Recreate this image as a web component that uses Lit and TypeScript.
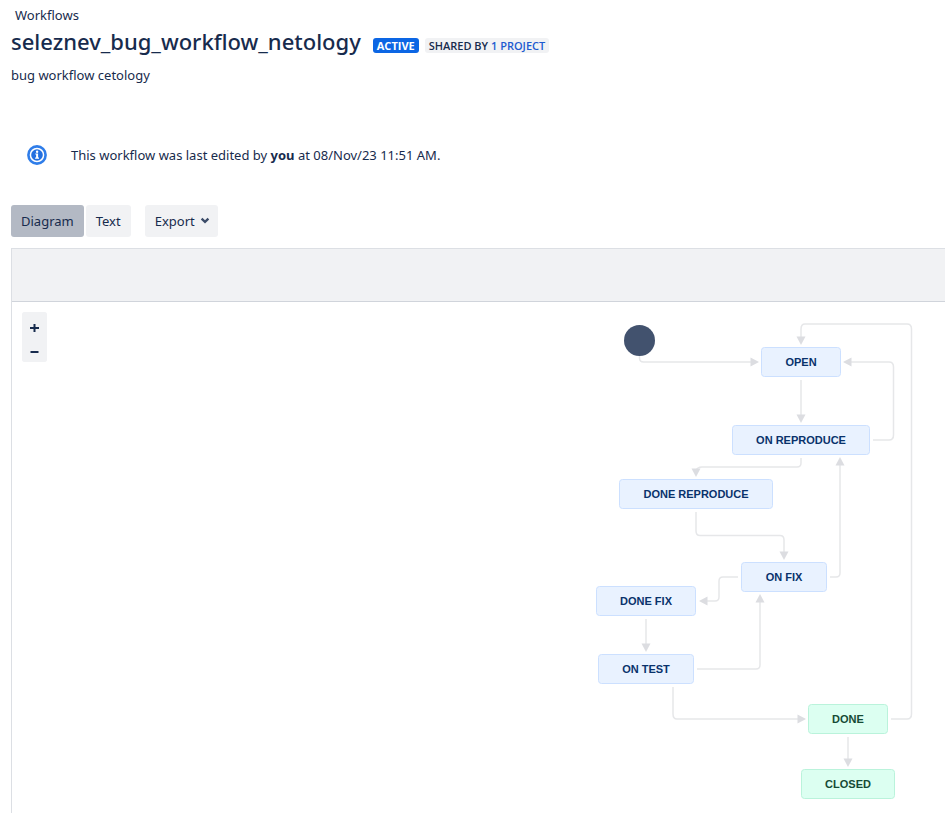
import { LitElement, html, svg, css } from "lit";
import { customElement, state } from "lit/decorators.js";

interface Status {
  label: string;
  x: number;
  y: number;
  width: number;
  done?: boolean;
}

const STATUSES: Status[] = [
  { label: "OPEN", x: 761, y: 347, width: 80 },
  { label: "ON REPRODUCE", x: 732, y: 425, width: 138 },
  { label: "DONE REPRODUCE", x: 619, y: 479, width: 154 },
  { label: "ON FIX", x: 741, y: 562, width: 86 },
  { label: "DONE FIX", x: 596, y: 586, width: 100 },
  { label: "ON TEST", x: 598, y: 654, width: 96 },
  { label: "DONE", x: 808, y: 704, width: 80, done: true },
  { label: "CLOSED", x: 801, y: 769, width: 94, done: true },
];

/* Each transition: the line, then the tip of its arrow head and its heading in degrees. */
const TRANSITIONS: [string, number, number, number][] = [
  ["M639.5 356V358Q639.5 362 643.5 362H752", 759, 362, 0],
  ["M891 719H907Q911.5 719 911.5 714V329Q911.5 324 907 324H805Q801 324 801 329V338", 801, 345, 90],
  ["M873 440H889Q893.5 440 893.5 435V367Q893.5 362 889 362H850", 843, 362, 180],
  ["M801 380V416", 801, 423, 90],
  ["M801 458V463Q801 467 797 467H702Q697 467 696 471", 696, 477, 90],
  ["M696 512V531Q696 535.5 700 535.5H780Q784 535.5 784 540V553", 784, 560, 90],
  ["M830 577H836Q840 577 840 573V465", 840, 457, 270],
  ["M738 577H723Q719 577 719 581V597Q719 601 715 601H706", 699, 601, 180],
  ["M646 619V645", 646, 652, 90],
  ["M697 669H756Q760 669 760 665V602", 760, 594, 270],
  ["M673 687V714Q673 719 677 719H798", 806, 719, 0],
  ["M848 737V760", 848, 767, 90],
];

@customElement("workflow-diagram")
export class WorkflowDiagram extends LitElement {
  static styles = css`
    :host { display: block; }
    svg { display: block; width: 325px; height: 510px; }
    .line { fill: none; stroke: #e6e7e9; stroke-width: 1.5; }
    .head { fill: #dcdde1; }
    .start { fill: #42526e; }
    .box { fill: #e9f2ff; stroke: #cce0ff; }
    .box.done { fill: #dcfff1; stroke: #baf3db; }
    .label {
      font: 700 11px "Liberation Sans", Arial, sans-serif;
      text-anchor: middle;
      fill: #09326c;
    }
    .label.done { fill: #164b35; }
  `;

  render() {
    return html`
      <svg viewBox="590 302 325 510" role="img" aria-label="Workflow diagram">
        ${TRANSITIONS.map(([path, x, y, turn]) => svg`
          <path class="line" d=${path}></path>
          <path class="head" d="M0 0L-8.5 -4.5V4.5Z" transform="translate(${x} ${y}) rotate(${turn})"></path>
        `)}
        <circle class="start" cx="639.5" cy="340.5" r="15.5"></circle>
        ${STATUSES.map((s) => svg`
          <rect class="box ${s.done ? "done" : ""}" x=${s.x + 0.5} y=${s.y + 0.5}
            width=${s.width - 1} height="29" rx="3"></rect>
          <text class="label ${s.done ? "done" : ""}" x=${s.x + s.width / 2} y=${s.y + 19}>${s.label}</text>
        `)}
      </svg>
    `;
  }
}

@customElement("app-root")
export class AppRoot extends LitElement {
  static styles = css`
    :host {
      display: flex;
      flex-direction: column;
      box-sizing: border-box;
      min-height: 100vh;
      padding: 5px 0 0 11px;
      background: #fff;
      color: #172b4d;
      font: 13px/20px "Noto Sans", "Open Sans", sans-serif;
    }
    a { color: inherit; text-decoration: none; }
    .crumbs { padding-left: 4px; }
    .heading { display: flex; align-items: center; height: 32px; }
    h1 { margin: 0 12px 0 0; font-size: 22px; line-height: 32px; font-weight: 500; }
    .lozenge {
      margin: 8px 6px 0 0;
      padding: 0 4px;
      border-radius: 3px;
      background: #f1f2f4;
      font: 600 11px/15px "Open Sans", "Noto Sans", sans-serif;
      white-space: nowrap;
    }
    .lozenge.active { background: #0c66e4; color: #fff; font-weight: 700; }
    .lozenge a { color: #1d5bd0; }
    .about { margin: 8px 0 0; }
    .notice { display: flex; align-items: center; gap: 24px; margin: 60px 0 0 16px; }
    .notice p { margin: 0; }
    .info { width: 20px; height: 20px; flex: none; }
    .tools { display: flex; align-items: flex-start; gap: 2px; margin: 40px 0 11px; }
    button {
      box-sizing: border-box;
      height: 32px;
      padding: 0 10px;
      border: 0;
      border-radius: 3px;
      background: #f1f2f4;
      color: inherit;
      font: inherit;
    }
    .mode[aria-pressed="true"] { background: #b3b9c4; }
    .export { display: flex; align-items: center; gap: 5px; margin-left: 12px; padding-right: 8px; }
    .panel {
      display: flex;
      flex: 1;
      flex-direction: column;
      border: solid #dcdfe4;
      border-width: 1px 0 0 1px;
    }
    .bar { height: 52px; border-bottom: 1px solid #d0d4db; background: #f1f2f4; }
    .canvas { display: flex; flex: 1; align-items: flex-start; justify-content: space-between; }
    .zoom {
      display: flex;
      flex-direction: column;
      margin: 10px;
      border-radius: 3px;
      background: #f1f2f4;
    }
    .zoom button { display: grid; place-items: end center; width: 25px; height: 25px; padding: 0 0 5px; }
    workflow-diagram { margin-right: 30px; }
  `;

  @state() private mode = "Diagram";

  render() {
    return html`
      <nav class="crumbs"><a href="#workflows">Workflows</a></nav>
      <header class="heading">
        <h1>seleznev_bug_workflow_netology</h1>
        <span class="lozenge active">ACTIVE</span>
        <span class="lozenge">SHARED BY <a href="#projects">1 PROJECT</a></span>
      </header>
      <p class="about">bug workflow cetology</p>
      <div class="notice">
        <svg class="info" viewBox="0 0 20 20" aria-hidden="true">
          <circle cx="10" cy="10" r="8.6" fill="#fff" stroke="#2f7de9" stroke-width="2.6"></circle>
          <circle cx="10" cy="10" r="5.8" fill="#2470e0"></circle>
          <path d="M8.3 8.4H11.1V12.6H12V13.8H8.1V12.6H9.1V9.6H8.3Z" fill="#fff"></path>
          <circle cx="10.1" cy="6.7" r="1.2" fill="#fff"></circle>
        </svg>
        <p>This workflow was last edited by <b>you</b> at 08/Nov/23 11:51 AM.</p>
      </div>
      <div class="tools">
        ${["Diagram", "Text"].map((m) => html`
          <button class="mode" aria-pressed=${this.mode === m ? "true" : "false"}
            @click=${() => (this.mode = m)}>${m}</button>
        `)}
        <button class="export" aria-haspopup="menu">
          Export
          <svg width="10" height="8" viewBox="0 0 10 8" aria-hidden="true">
            <path d="M1.6 1.6L5 4.8L8.4 1.6" fill="none" stroke="#3b4b68" stroke-width="2.3"></path>
          </svg>
        </button>
      </div>
      <section class="panel">
        <div class="bar"></div>
        <div class="canvas">
          <div class="zoom">
            <button aria-label="Zoom in">
              <svg width="9" height="9" viewBox="0 0 9 9"><path d="M0 5H9M4.5 1V9" stroke="#172b4d" stroke-width="2"></path></svg>
            </button>
            <button aria-label="Zoom out">
              <svg width="9" height="9" viewBox="0 0 9 9"><path d="M0.5 4H8.5" stroke="#172b4d" stroke-width="2"></path></svg>
            </button>
          </div>
          <workflow-diagram></workflow-diagram>
        </div>
      </section>
    `;
  }
}
